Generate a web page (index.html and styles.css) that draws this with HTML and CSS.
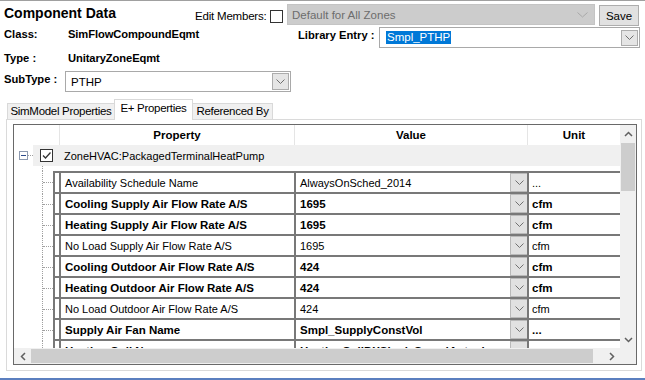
FILE: index.html
```html
<!DOCTYPE html>
<html>
<head>
<meta charset="utf-8">
<link rel="stylesheet" href="styles.css">
</head>
<body>
<div class="app">
  <div class="hdr">
    <div class="r1">
      <div class="title">Component Data</div>
      <div class="edit">Edit Members:</div>
      <span class="chk"></span>
      <div class="combo dis">
        <span>Default for All Zones</span>
        <svg class="chev-l" width="11" height="6" viewBox="0 0 11 6"><path d="M0.5 0.5 L5.5 5 L10.5 0.5" fill="none" stroke="#a8a8a8" stroke-width="1"/></svg>
      </div>
      <button class="btn">Save</button>
    </div>
    <div class="r2">
      <div class="lbl">Class:</div>
      <div class="val">SimFlowCompoundEqmt</div>
      <div class="lbl2">Library Entry :</div>
      <div class="combo lib">
        <span class="sel">Smpl_PTHP</span>
        <span class="ddb"><svg width="9" height="5" viewBox="0 0 9 5"><path d="M0.5 0.5 L4.5 4.5 L8.5 0.5" fill="none" stroke="#6e6e6e" stroke-width="1"/></svg></span>
      </div>
    </div>
    <div class="r3">
      <div class="lbl">Type :</div>
      <div class="val">UnitaryZoneEqmt</div>
    </div>
    <div class="r4">
      <div class="lbl sub">SubType :</div>
      <div class="combo subc">
        <span class="txt">PTHP</span>
        <span class="ddb"><svg width="9" height="5" viewBox="0 0 9 5"><path d="M0.5 0.5 L4.5 4.5 L8.5 0.5" fill="none" stroke="#6e6e6e" stroke-width="1"/></svg></span>
      </div>
    </div>
  </div>

  <div class="tabs">
    <div class="tab t1">SimModel Properties</div>
    <div class="tab active">E+ Properties</div>
    <div class="tab t3">Referenced By</div>
  </div>

  <div class="page">
    <div class="grid">
      <div class="viewport">
        <div class="ghead">
          <div class="gh-tree"></div>
          <div class="gh-p">Property</div>
          <div class="gh-v">Value</div>
          <div class="gh-u">Unit</div>
        </div>
        <div class="cat">
          <div class="cat-exp"><span class="expbox"><i></i></span><span class="dots"></span></div>
          <div class="cat-body">
            <span class="cchk"><svg width="11" height="11" viewBox="0 0 11 11"><path d="M2 5.5 L4.5 8 L9.5 2.5" fill="none" stroke="#333" stroke-width="1.3"/></svg></span>
            <span class="cat-txt">ZoneHVAC:PackagedTerminalHeatPump</span>
          </div>
        </div>
        <div class="gap"></div>
        <div class="rows">
          <div class="row first">
            <div class="tree"><i></i></div>
            <div class="cells">
              <div class="rh"></div>
              <div class="p">Availability Schedule Name</div>
              <div class="v"><span>AlwaysOnSched_2014</span><span class="dd"><svg width="9" height="5" viewBox="0 0 9 5"><path d="M0.5 0.5 L4.5 4.5 L8.5 0.5" fill="none" stroke="#707070" stroke-width="1"/></svg></span></div>
              <div class="u">...</div>
            </div>
          </div>
          <div class="row b">
            <div class="tree"><i></i></div>
            <div class="cells">
              <div class="rh"></div>
              <div class="p">Cooling Supply Air Flow Rate A/S</div>
              <div class="v"><span>1695</span><span class="dd"><svg width="9" height="5" viewBox="0 0 9 5"><path d="M0.5 0.5 L4.5 4.5 L8.5 0.5" fill="none" stroke="#707070" stroke-width="1"/></svg></span></div>
              <div class="u">cfm</div>
            </div>
          </div>
          <div class="row b">
            <div class="tree"><i></i></div>
            <div class="cells">
              <div class="rh"></div>
              <div class="p">Heating Supply Air Flow Rate A/S</div>
              <div class="v"><span>1695</span><span class="dd"><svg width="9" height="5" viewBox="0 0 9 5"><path d="M0.5 0.5 L4.5 4.5 L8.5 0.5" fill="none" stroke="#707070" stroke-width="1"/></svg></span></div>
              <div class="u">cfm</div>
            </div>
          </div>
          <div class="row">
            <div class="tree"><i></i></div>
            <div class="cells">
              <div class="rh"></div>
              <div class="p">No Load Supply Air Flow Rate A/S</div>
              <div class="v"><span>1695</span><span class="dd"><svg width="9" height="5" viewBox="0 0 9 5"><path d="M0.5 0.5 L4.5 4.5 L8.5 0.5" fill="none" stroke="#707070" stroke-width="1"/></svg></span></div>
              <div class="u">cfm</div>
            </div>
          </div>
          <div class="row b">
            <div class="tree"><i></i></div>
            <div class="cells">
              <div class="rh"></div>
              <div class="p">Cooling Outdoor Air Flow Rate A/S</div>
              <div class="v"><span>424</span><span class="dd"><svg width="9" height="5" viewBox="0 0 9 5"><path d="M0.5 0.5 L4.5 4.5 L8.5 0.5" fill="none" stroke="#707070" stroke-width="1"/></svg></span></div>
              <div class="u">cfm</div>
            </div>
          </div>
          <div class="row b">
            <div class="tree"><i></i></div>
            <div class="cells">
              <div class="rh"></div>
              <div class="p">Heating Outdoor Air Flow Rate A/S</div>
              <div class="v"><span>424</span><span class="dd"><svg width="9" height="5" viewBox="0 0 9 5"><path d="M0.5 0.5 L4.5 4.5 L8.5 0.5" fill="none" stroke="#707070" stroke-width="1"/></svg></span></div>
              <div class="u">cfm</div>
            </div>
          </div>
          <div class="row">
            <div class="tree"><i></i></div>
            <div class="cells">
              <div class="rh"></div>
              <div class="p">No Load Outdoor Air Flow Rate A/S</div>
              <div class="v"><span>424</span><span class="dd"><svg width="9" height="5" viewBox="0 0 9 5"><path d="M0.5 0.5 L4.5 4.5 L8.5 0.5" fill="none" stroke="#707070" stroke-width="1"/></svg></span></div>
              <div class="u">cfm</div>
            </div>
          </div>
          <div class="row b">
            <div class="tree"><i></i></div>
            <div class="cells">
              <div class="rh"></div>
              <div class="p">Supply Air Fan Name</div>
              <div class="v"><span>Smpl_SupplyConstVol</span><span class="dd"><svg width="9" height="5" viewBox="0 0 9 5"><path d="M0.5 0.5 L4.5 4.5 L8.5 0.5" fill="none" stroke="#707070" stroke-width="1"/></svg></span></div>
              <div class="u">...</div>
            </div>
          </div>
          <div class="row b">
            <div class="tree"><i></i></div>
            <div class="cells">
              <div class="rh"></div>
              <div class="p">Heating Coil Name</div>
              <div class="v"><span>HeatingCoilDXSingleSpeedAutosize</span><span class="dd"><svg width="9" height="5" viewBox="0 0 9 5"><path d="M0.5 0.5 L4.5 4.5 L8.5 0.5" fill="none" stroke="#707070" stroke-width="1"/></svg></span></div>
              <div class="u">...</div>
            </div>
          </div>
        </div>
      </div>
      <div class="vs">
        <div class="arr"><svg width="9" height="6" viewBox="0 0 9 6"><path d="M1 5 L4.5 1.5 L8 5" fill="none" stroke="#606060" stroke-width="1.5"/></svg></div>
        <div class="vthumb"></div>
        <div class="sp"></div>
        <div class="arr"><svg width="9" height="6" viewBox="0 0 9 6"><path d="M1 1 L4.5 4.5 L8 1" fill="none" stroke="#606060" stroke-width="1.5"/></svg></div>
      </div>
      <div class="hs">
        <div class="arr"><svg width="6" height="9" viewBox="0 0 6 9"><path d="M5 1 L1.5 4.5 L5 8" fill="none" stroke="#606060" stroke-width="1.5"/></svg></div>
        <div class="hthumb"></div>
        <div class="sp"></div>
        <div class="arr"><svg width="6" height="9" viewBox="0 0 6 9"><path d="M1 1 L4.5 4.5 L1 8" fill="none" stroke="#606060" stroke-width="1.5"/></svg></div>
      </div>
      <div class="corner"></div>
    </div>
  </div>

  <div class="footer"></div>
</div>
</body>
</html>
```

FILE: styles.css
```css
* { box-sizing: border-box; }
body {
  margin: 0;
  background: #fff;
  font-family: "Liberation Sans", Arial, sans-serif;
  font-size: 11.5px;
  color: #000;
}
.app {
  width: 645px;
  height: 380px;
  display: flex;
  flex-direction: column;
  border-top: 1px solid #a0a0a0;
  overflow: hidden;
}

/* header */
.hdr { padding-left: 4px; }
.r1 { display: flex; align-items: center; height: 21px; margin-top: 3px; }
.title { width: 191px; font-weight: bold; font-size: 14px; padding-bottom: 3px; }
.edit { width: 75px; font-size: 11.5px; padding-top: 2px; letter-spacing: -0.2px; }
.chk { width: 13px; height: 13px; border: 1px solid #333; background: #fff; margin-top: 4px; }
.combo {
  display: flex;
  align-items: center;
  height: 21px;
  border: 1px solid #a9a9a9;
  background: #fff;
}
.combo.dis {
  margin-left: 4px;
  width: 308px;
  background: #cccccc;
  border-color: #c4c4c4;
  color: #6d6d6d;
  padding-left: 4px;
  padding-right: 6px;
  justify-content: space-between;
  font-size: 11.5px;
}
.btn {
  margin-left: 4px;
  width: 40px;
  height: 21px;
  margin-top: 2px;
  background: #e1e1e1;
  border: 1px solid #adadad;
  font-family: inherit;
  font-size: 11.5px;
  color: #000;
  padding: 0;
}
.r2 { display: flex; height: 21px; margin-top: 2px; }
.lbl { width: 64px; font-weight: bold; font-size: 11.2px; line-height: 14px; }
.val { width: 230px; font-weight: bold; font-size: 11.2px; line-height: 14px; letter-spacing: -0.1px; }
.lbl2 { width: 81px; font-weight: bold; font-size: 11.2px; line-height: 14px; padding-top: 1px; }
.combo.lib { width: 261px; padding-left: 6px; justify-content: space-between; }
.sel {
  background: #0078d7;
  color: #fff;
  font-size: 11.5px;
  line-height: 13px;
  padding: 0 1px;
}
.ddb {
  width: 17px;
  height: 16px;
  margin-right: 1px;
  background: #e5e5e5;
  border: 1px solid #acacac;
  display: flex;
  align-items: center;
  justify-content: center;
}
.r3 { display: flex; height: 23px; align-items: center; padding-bottom: 3px; }
.r4 { display: flex; height: 21px; }
.lbl.sub { width: 61px; padding-top: 1px; }
.combo.subc { width: 226px; padding-left: 5px; justify-content: space-between; }
.combo.subc .ddb { height: 17px; margin-right: 1px; }
.txt { font-size: 11.5px; }

/* tabs */
.tabs {
  display: flex;
  align-items: flex-end;
  height: 20px;
  margin-top: 7px;
  margin-left: 7px;
  position: relative;
  z-index: 1;
}
.tab {
  height: 16px;
  border: 1px solid #d9d9d9;
  border-bottom: none;
  background: #f0f0f0;
  font-size: 11.5px;
  line-height: 15px;
  text-align: center;
  letter-spacing: -0.3px;
}
.tab.t1 { width: 107px; border-right: none; }
.tab.active {
  width: 79px;
  height: 21px;
  margin-bottom: -1px;
  background: #fff;
  line-height: 17px;
}
.tab.t3 { width: 80px; border-left: none; }

/* page */
.page {
  margin-left: 6px;
  width: 636px;
  height: 252px;
  border: 1px solid #dadada;
  padding: 4px 4px 5px 6px;
}
.grid {
  width: 624px;
  height: 241px;
  border: 1px solid #696969;
  display: grid;
  grid-template-columns: 606px 16px;
  grid-template-rows: 223px 16px;
}
.viewport { overflow: hidden; background: #fff; }

.ghead { display: flex; height: 20px; font-weight: bold; font-size: 11.5px; }
.ghead > div { display: flex; align-items: center; justify-content: center; }
.gh-tree { width: 46px; border-right: 1px solid #e5e5e5; }
.gh-p { width: 235px; border-right: 1px solid #e5e5e5; }
.gh-v { width: 233px; border-right: 1px solid #e5e5e5; }
.gh-u { flex: 1; }

.cat { display: flex; height: 21px; }
.cat-exp { width: 19px; display: flex; align-items: center; padding-left: 5px; }
.expbox {
  width: 9px;
  height: 9px;
  border: 1px solid #8d9ab0;
  display: flex;
  align-items: center;
  justify-content: center;
  background: #fff;
}
.expbox i { width: 5px; height: 1px; background: #2b4b8c; }
.dots { flex: 1; border-top: 1px dotted #a0a0a0; }
.cat-body {
  flex: 1;
  background: #f0f0f0;
  display: flex;
  align-items: center;
  padding-left: 7px;
}
.cchk {
  width: 13px;
  height: 13px;
  border: 1px solid #333;
  background: #fff;
  display: flex;
  align-items: center;
  justify-content: center;
}
.cat-txt { margin-left: 11px; font-size: 11px; }

.gap { height: 5px; margin-left: 28px; border-left: 1px dotted #a0a0a0; }

.row { display: flex; height: 21px; font-size: 11px; }
.row.first { height: 23px; }
.row.b { font-weight: bold; font-size: 11.5px; }
.tree { width: 39px; padding-left: 28px; display: flex; }
.tree i {
  flex: 1;
  border-left: 1px dotted #a0a0a0;
  display: flex;
  align-items: center;
}
.tree i::after { content: ""; flex: 1; border-top: 1px dotted #a0a0a0; }
.cells {
  flex: 1;
  display: flex;
  border-left: 2px solid #787878;
  border-bottom: 2px solid #787878;
}
.row.first .cells { border-top: 2px solid #787878; }
.rh { width: 6px; border-right: 2px solid #787878; }
.p {
  width: 235px;
  border-right: 2px solid #787878;
  padding-left: 4px;
  display: flex;
  align-items: center;
  white-space: nowrap;
  overflow: hidden;
}
.v {
  width: 233px;
  border-right: 2px solid #787878;
  display: flex;
  align-items: center;
}
.v span:first-child { flex: 1; padding-left: 4px; white-space: nowrap; overflow: hidden; }
.dd {
  width: 17px;
  align-self: stretch;
  background: #e1e1e1;
  border: 1px solid #b9b9b9;
  border-right: none;
  display: flex;
  align-items: center;
  justify-content: center;
}
.u { flex: 1; padding-left: 3px; display: flex; align-items: center; }

/* scrollbars */
.vs {
  background: #f0f0f0;
  display: flex;
  flex-direction: column;
  align-items: center;
}
.vs .arr { height: 17px; width: 16px; display: flex; align-items: center; justify-content: center; }
.vthumb { width: 14px; height: 48px; margin-top: 1px; background: #cdcdcd; }
.sp { flex: 1; }
.hs {
  background: #f0f0f0;
  display: flex;
  align-items: center;
}
.hs .arr { width: 17px; height: 16px; display: flex; align-items: center; justify-content: center; }
.hthumb { width: 562px; height: 14px; background: #cdcdcd; }
.corner { background: #f0f0f0; }

.footer { margin-top: auto; height: 2px; background: #5b7fbf; }
```
